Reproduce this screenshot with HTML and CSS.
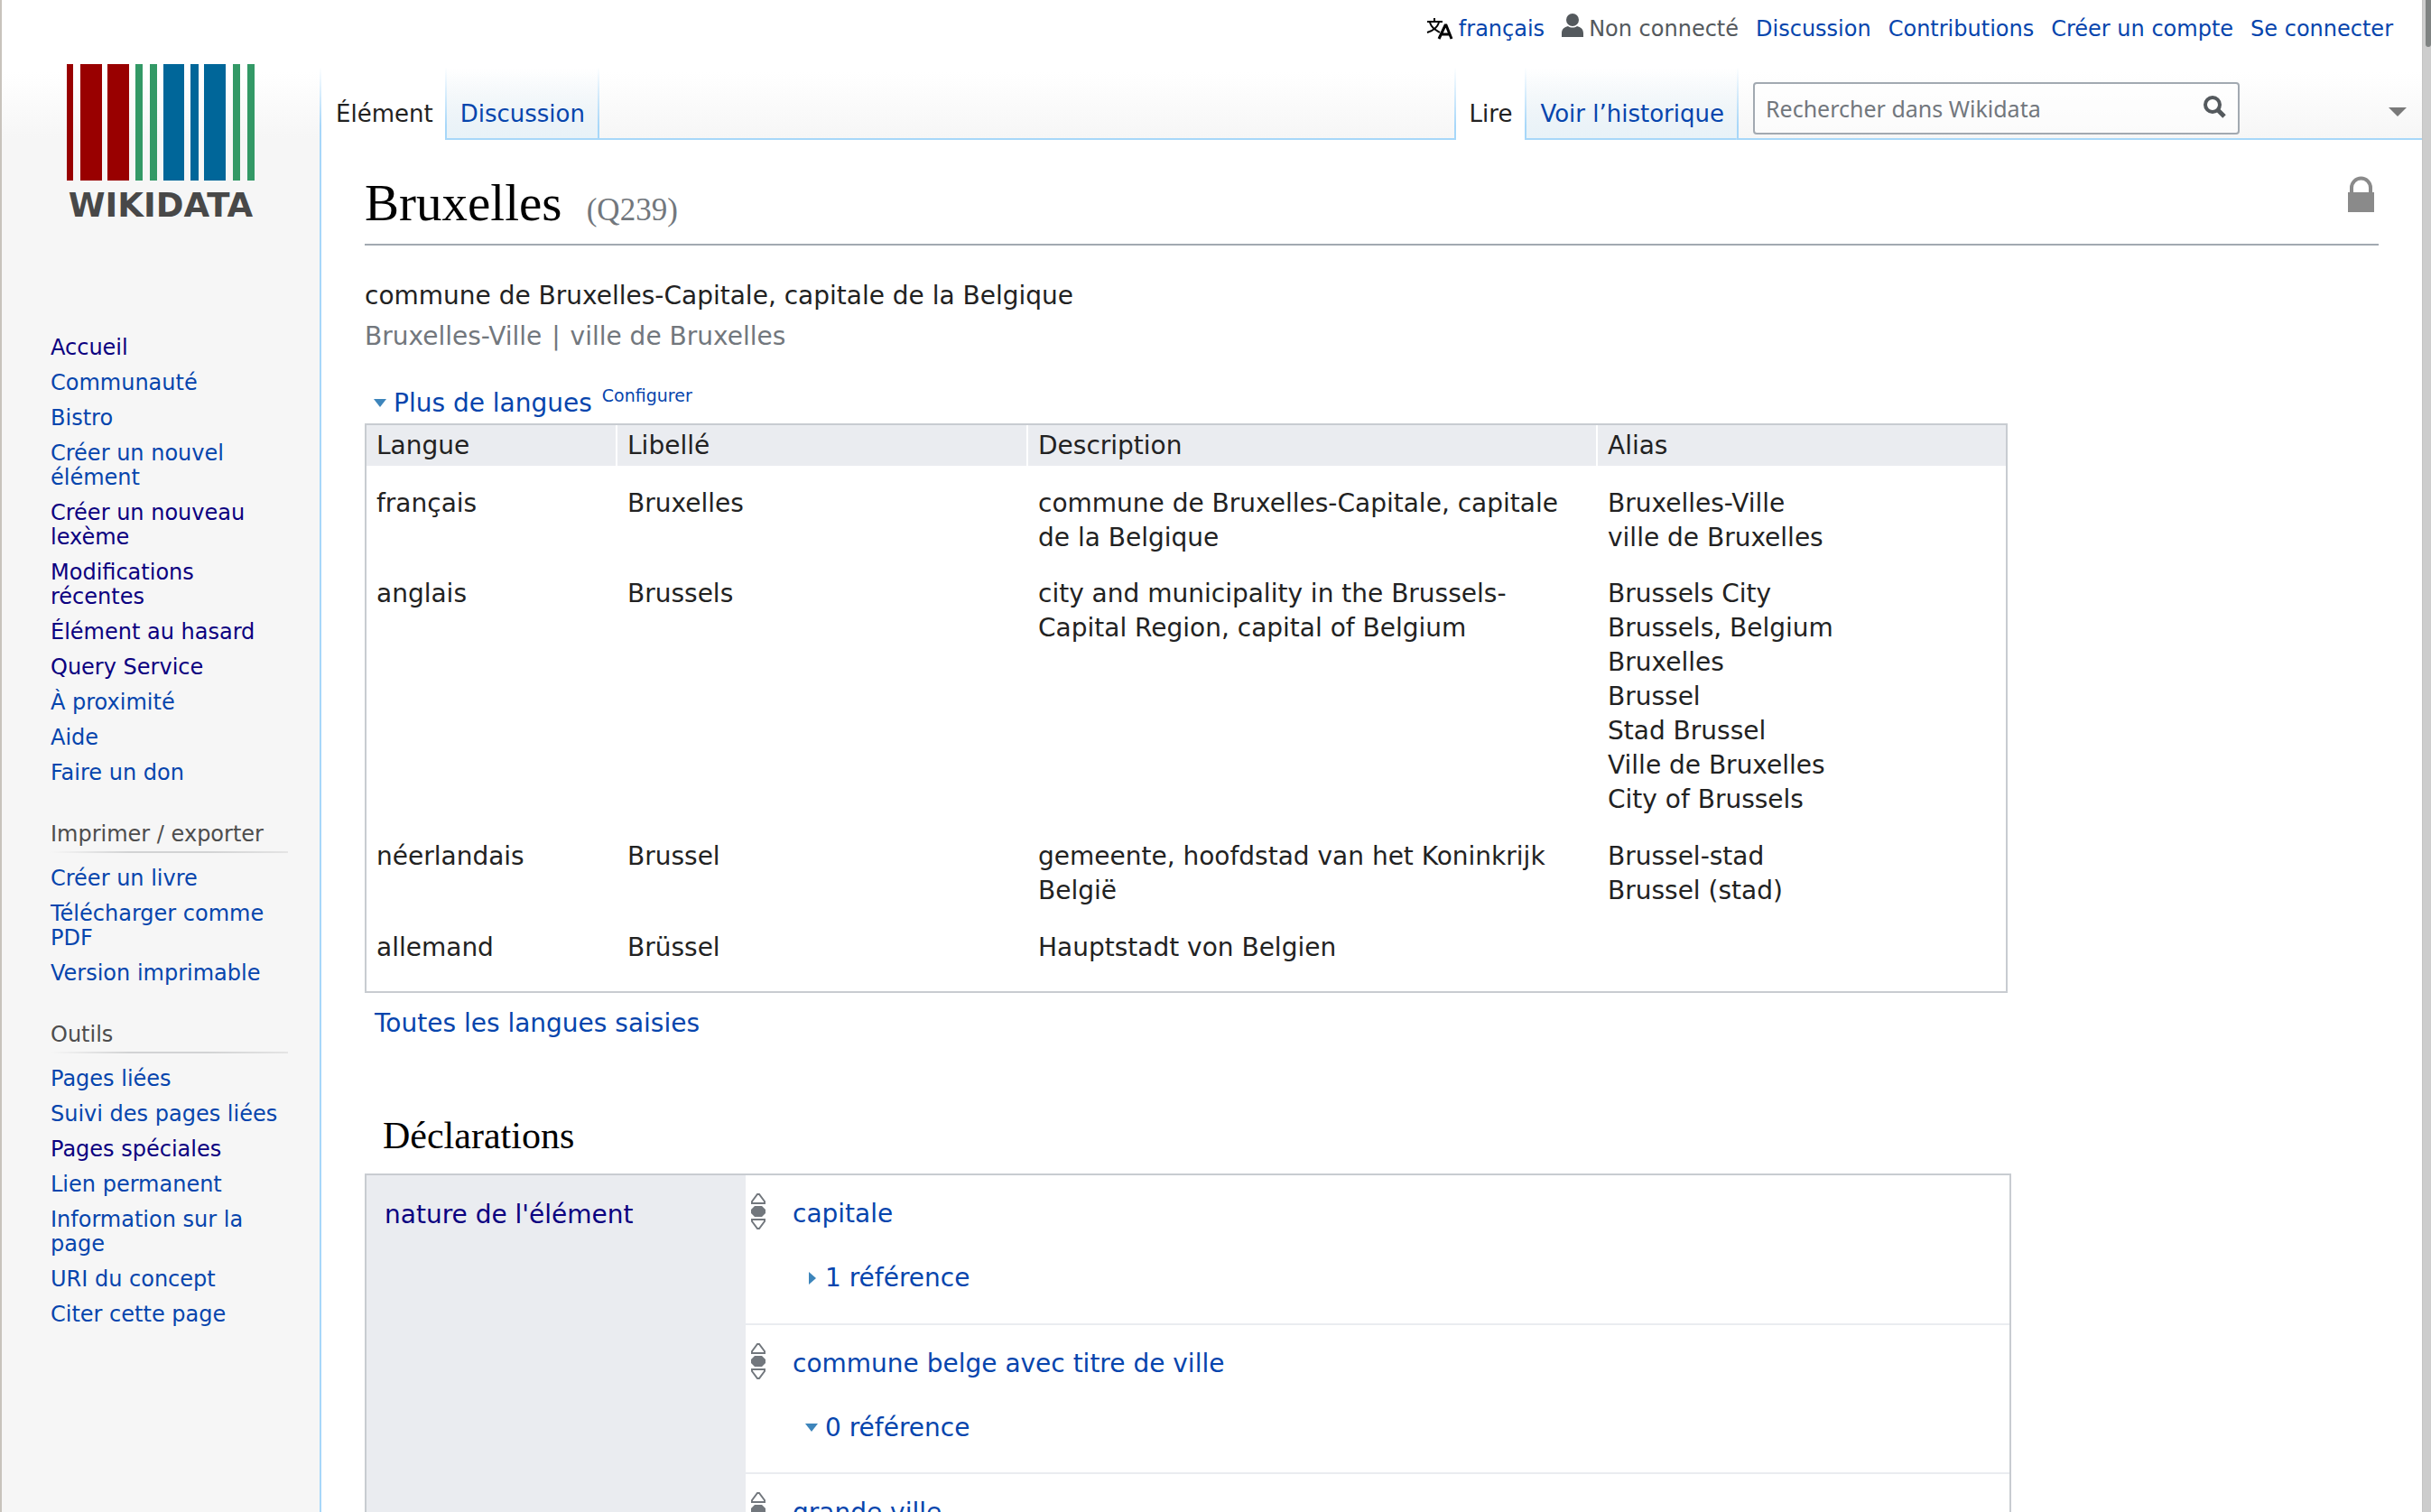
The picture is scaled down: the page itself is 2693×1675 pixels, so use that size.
FILE: index.html
```html
<!DOCTYPE html>
<html lang="fr">
<head>
<meta charset="utf-8">
<title>Bruxelles - Wikidata</title>
<link rel="stylesheet" href="styles.css">
</head>
<body>
<div class="page">
  <aside class="sidebar">
    <a class="logo" href="#" aria-label="Wikidata">
      <svg width="208" height="172" viewBox="0 0 208 172">
        <g fill="#900"><path d="M0 0h7v129H0zM15 0h24v129H15zM45 0h24v129H45z"/></g>
        <g fill="#396"><path d="M76 0h8v129h-8zM92 0h8v129h-8zM184 0h8v129h-8zM200 0h8v129h-8z"/></g>
        <g fill="#069"><path d="M107 0h23v129h-23zM137 0h9v129h-9zM152 0h24v129h-24z"/></g>
        <text class="logo-text" x="104" y="169" text-anchor="middle">WIKIDATA</text>
      </svg>
    </a>
    <nav class="portal">
      <ul>
        <li><a class="visited" href="#">Accueil</a></li>
        <li><a href="#">Communauté</a></li>
        <li><a href="#">Bistro</a></li>
        <li><a href="#">Créer un nouvel élément</a></li>
        <li><a class="visited" href="#">Créer un nouveau lexème</a></li>
        <li><a class="visited" href="#">Modifications récentes</a></li>
        <li><a class="visited" href="#">Élément au hasard</a></li>
        <li><a class="visited" href="#">Query Service</a></li>
        <li><a href="#">À proximité</a></li>
        <li><a href="#">Aide</a></li>
        <li><a href="#">Faire un don</a></li>
      </ul>
    </nav>
    <nav class="portal">
      <h3>Imprimer / exporter</h3>
      <ul>
        <li><a href="#">Créer un livre</a></li>
        <li><a href="#">Télécharger comme PDF</a></li>
        <li><a href="#">Version imprimable</a></li>
      </ul>
    </nav>
    <nav class="portal">
      <h3>Outils</h3>
      <ul>
        <li><a href="#">Pages liées</a></li>
        <li><a href="#">Suivi des pages liées</a></li>
        <li><a class="visited" href="#">Pages spéciales</a></li>
        <li><a href="#">Lien permanent</a></li>
        <li><a href="#">Information sur la page</a></li>
        <li><a href="#">URI du concept</a></li>
        <li><a href="#">Citer cette page</a></li>
      </ul>
    </nav>
  </aside>

  <div class="column">
    <header class="head">
      <ul class="personal">
        <li class="with-icon">
          <svg width="30" height="24" viewBox="0 0 30 24" fill="none" stroke="#000" stroke-width="2"><path d="M1 4h17M9 0v4M4 5c2 6 6 8 11 11M14 5c-2 6-6 9-13 11"/><path stroke-width="3" d="M14 23l7-15h1l6 15M16 18h10"/></svg>
          <a href="#">français</a>
        </li>
        <li class="with-icon user">
          <svg width="24" height="26" viewBox="0 0 24 26" fill="#54595d"><circle cx="12" cy="7" r="7"/><path d="M0 26v-4c0-5 3-7 7-8 3 2 7 2 10 0 4 1 7 3 7 8v4z"/></svg>
          <span>Non connecté</span>
        </li>
        <li><a href="#">Discussion</a></li>
        <li><a href="#">Contributions</a></li>
        <li><a href="#">Créer un compte</a></li>
        <li><a href="#">Se connecter</a></li>
      </ul>
      <div class="nav-row">
        <div class="tabs left-tabs">
          <a class="tab selected" href="#">Élément</a>
          <a class="tab" href="#">Discussion</a>
        </div>
        <div class="tabs right-tabs">
          <a class="tab selected" href="#">Lire</a>
          <a class="tab" href="#">Voir l’historique</a>
        </div>
        <form class="search">
          <input type="search" aria-label="Rechercher dans Wikidata" placeholder="Rechercher dans Wikidata">
          <button type="button" aria-label="Rechercher"><svg width="26" height="26" viewBox="0 0 26 26" fill="none" stroke="#54595d" stroke-width="4"><circle cx="11" cy="11" r="8"/><path stroke-width="5" d="M17 17l7 7"/></svg></button>
        </form>
        <button class="more" type="button" aria-label="Plus"><svg width="20" height="10" viewBox="0 0 20 10" fill="#797979"><path d="M0 0h20L10 10z"/></svg></button>
      </div>
    </header>

    <main class="content">
      <div class="title-row">
        <h1>Bruxelles <span class="entity-id">(Q239)</span></h1>
        <svg class="lock" width="29" height="40" viewBox="0 0 29 40"><path d="M4 20v-7a10 10 0 0 1 21 0v7" fill="none" stroke="#8a8a8a" stroke-width="4"/><path d="M0 18h29v22H0z" fill="#8a8a8a"/></svg>
      </div>
      <p class="description">commune de Bruxelles-Capitale, capitale de la Belgique</p>
      <p class="aliases">Bruxelles-Ville <span class="separator">|</span> ville de Bruxelles</p>

      <div class="lang-toggle">
        <svg class="arrow" width="16" height="10" viewBox="0 0 16 10"><path d="M1 0h14L8 9z" fill="#3d85bb"/></svg>
        <a href="#">Plus de langues</a>
        <a class="configure" href="#">Configurer</a>
      </div>

      <table class="terms">
        <colgroup><col class="c-lang"><col class="c-label"><col class="c-desc"><col class="c-alias"></colgroup>
        <thead><tr><th scope="col">Langue</th><th scope="col">Libellé</th><th scope="col">Description</th><th scope="col">Alias</th></tr></thead>
        <tbody>
          <tr><td>français</td><td>Bruxelles</td><td>commune de Bruxelles-Capitale, capitale de la Belgique</td><td><ul><li>Bruxelles-Ville</li><li>ville de Bruxelles</li></ul></td></tr>
          <tr><td>anglais</td><td>Brussels</td><td>city and municipality in the Brussels-Capital Region, capital of Belgium</td><td><ul><li>Brussels City</li><li>Brussels, Belgium</li><li>Bruxelles</li><li>Brussel</li><li>Stad Brussel</li><li>Ville de Bruxelles</li><li>City of Brussels</li></ul></td></tr>
          <tr><td>néerlandais</td><td>Brussel</td><td>gemeente, hoofdstad van het Koninkrijk België</td><td><ul><li>Brussel-stad</li><li>Brussel (stad)</li></ul></td></tr>
          <tr><td>allemand</td><td>Brüssel</td><td>Hauptstadt von Belgien</td><td></td></tr>
        </tbody>
      </table>
      <p class="all-langs"><a href="#">Toutes les langues saisies</a></p>

      <h2>Déclarations</h2>
      <section class="statements">
        <div class="property"><a class="visited" href="#">nature de l'élément</a></div>
        <div class="values">
          <div class="statement">
            <svg class="rank" width="16" height="40" viewBox="0 0 16 40"><g fill="none" stroke="#72777d" stroke-width="2"><path d="M1 11V9l6-8h2l6 8v2zM1 29v2l6 8h2l6-8v-2z"/></g><path d="M4 14h8l4 4v4l-4 4H4l-4-4v-4z" fill="#72777d"/></svg>
            <div class="claim">
              <a href="#">capitale</a>
              <div class="refs"><svg class="arrow" width="16" height="14" viewBox="0 0 16 14"><path d="M5 0l8 7-8 7z" fill="#3d85bb"/></svg><a href="#">1 référence</a></div>
            </div>
          </div>
          <div class="statement">
            <svg class="rank" width="16" height="40" viewBox="0 0 16 40"><g fill="none" stroke="#72777d" stroke-width="2"><path d="M1 11V9l6-8h2l6 8v2zM1 29v2l6 8h2l6-8v-2z"/></g><path d="M4 14h8l4 4v4l-4 4H4l-4-4v-4z" fill="#72777d"/></svg>
            <div class="claim">
              <a href="#">commune belge avec titre de ville</a>
              <div class="refs"><svg class="arrow" width="16" height="10" viewBox="0 0 16 10"><path d="M1 0h14L8 9z" fill="#3d85bb"/></svg><a href="#">0 référence</a></div>
            </div>
          </div>
          <div class="statement">
            <svg class="rank" width="16" height="40" viewBox="0 0 16 40"><g fill="none" stroke="#72777d" stroke-width="2"><path d="M1 11V9l6-8h2l6 8v2zM1 29v2l6 8h2l6-8v-2z"/></g><path d="M4 14h8l4 4v4l-4 4H4l-4-4v-4z" fill="#72777d"/></svg>
            <div class="claim"><a href="#">grande ville</a></div>
          </div>
        </div>
      </section>
    </main>
  </div>
  <div class="scrollbar" aria-hidden="true"><div class="thumb"></div></div>
</div>
</body>
</html>
```
FILE: styles.css
```css
* { box-sizing: border-box; }
html, body { height: 100%; }
body {
  margin: 0;
  overflow: hidden;
  background: #fff;
  color: #222;
  font: 28px/38px "DejaVu Sans", sans-serif;
}
a { color: #0645ad; text-decoration: none; }
a.visited { color: #0b0080; }
ul { list-style: none; margin: 0; padding: 0; }
h1, h2, h3, p { margin: 0; font-weight: normal; }
svg { display: block; flex: none; overflow: visible; }
button { border: 0; padding: 0; background: none; }

.page {
  display: flex;
  height: 100vh;
  overflow: hidden;
  border-left: 2px solid #c8c3bc;
  background: linear-gradient(#fff 80px, #f6f6f6 153px);
}

/* Sidebar */
.sidebar { flex: none; width: 352px; padding: 71px 35px 0 54px; font-size: 24px; line-height: 27px; }
.logo { display: block; margin: 0 0 129px 18px; }
.logo-text { font: bold 37px "DejaVu Sans", sans-serif; fill: #484848; }
.portal { margin-bottom: 41px; }
.portal li + li { margin-top: 12px; }
.portal h3 {
  margin-bottom: 15px;
  padding-bottom: 7px;
  background: linear-gradient(to right, rgba(200, 204, 209, 0), #d2d3d4 33%, #d2d3d4 66%, #e4e4e4) bottom / 100% 2px no-repeat;
  color: #4d4d4d;
  font-size: 24px;
}

/* Header */
.column { flex: 1; min-width: 0; display: flex; flex-direction: column; }
.head { flex: none; }
.personal {
  display: flex;
  justify-content: flex-end;
  gap: 19px;
  height: 75px;
  padding: 14px 32px 0 0;
  font-size: 24px;
  line-height: 37px;
}
.with-icon { display: flex; gap: 6px; }
.with-icon svg { margin-top: 6px; }
.user { color: #54595d; }
.user svg { margin-top: 1px; }
.nav-row { display: flex; height: 80px; font-size: 26px; }
.tabs { display: flex; }
.left-tabs { flex: 1; border-bottom: 2px solid #a7d7f9; }
.tab {
  padding: 32px 14px 0 15px;
  margin-bottom: -2px;
  border-right: 2px solid;
  border-image: linear-gradient(rgba(167, 215, 249, 0), #a7d7f9 80%) 1;
  background: linear-gradient(rgba(255, 255, 255, 0), #e8f2f8) 0 0 / 100% 78px no-repeat, linear-gradient(#a7d7f9, #a7d7f9) bottom / 100% 2px no-repeat;
  white-space: nowrap;
}
.tab.selected { border-left: 2px solid; background: #fff; color: #222; }
.left-tabs .selected { padding-left: 16px; padding-right: 13px; }
.right-tabs .tab { margin-bottom: 0; }
.search {
  display: flex;
  align-items: flex-start;
  flex: none;
  width: 757px;
  padding: 16px 0 0 16px;
  border-bottom: 2px solid #a7d7f9;
}
.search input {
  width: 539px;
  height: 58px;
  margin-right: -56px;
  padding: 0 60px 0 12px;
  border: 2px solid #a2a9b1;
  border-radius: 4px;
  outline: 0;
  background: rgba(255, 255, 255, 0.5);
  color: #222;
  font: 25px "Noto Sans", sans-serif;
  appearance: none;
}
.search input::placeholder { color: #72777d; opacity: 1; }
.search button { padding: 14px 15px; }
.more { display: flex; align-items: center; width: 0; margin: 0; }
.more svg { margin-left: -37px; margin-top: 17px; }

/* Content */
.content { flex: 1; padding: 35px 48px 0; border-left: 2px solid #a7d7f9; background: #fff; }
.title-row {
  display: flex;
  justify-content: space-between;
  height: 82px;
  margin-bottom: 37px;
  border-bottom: 2px solid #a2a9b1;
}
h1 { color: #000; font: 57px/70px "Liberation Serif", serif; }
.entity-id { margin-left: 13px; color: #72777d; font-size: 35px; }
.lock { margin: 5px 5px 0 0; }
.aliases { margin: 7px 0 36px; color: #72777d; }
.separator { margin: 0 2px; }
.lang-toggle { display: flex; align-items: center; margin-bottom: 3px; padding-left: 9px; }
.arrow { margin-right: 7px; }
.configure { align-self: flex-start; margin: -9px 0 0 11px; font-size: 19px; }

.terms {
  width: 1820px;
  max-width: 100%;
  table-layout: fixed;
  border: 2px solid #c8ccd1;
  border-spacing: 0;
}
.c-lang { width: 278px; }
.c-label { width: 455px; }
.c-desc { width: 631px; }
.terms th { padding: 4px 11px 3px; background: #eaecf0; font-weight: normal; text-align: left; }
.terms th:not(:last-child) { border-right: 2px solid #fff; }
.terms td { padding: 12px 11px 13px; vertical-align: top; }
.terms tr:first-child td { padding-top: 23px; padding-bottom: 12px; }
.terms tr:last-child td { padding-bottom: 29px; }
.all-langs { margin: 15px 0 0 11px; }

h2 { margin: 80px 0 17px 20px; color: #000; font: 42px/50px "Liberation Serif", serif; }
.statements { display: flex; width: 1824px; max-width: 100%; border: 2px solid #c8ccd1; }
.property { flex: none; width: 420px; padding: 25px 20px; background: #eaecf0; }
.values { flex: 1; }
.statement { display: flex; height: 165px; padding: 20px 6px 0; }
.statement:first-child { height: 164px; }
.statement + .statement { border-top: 2px solid #eaecf0; }
.claim { padding: 4px 0 0 30px; }
.refs { display: flex; align-items: center; margin-top: 33px; padding-left: 13px; }

/* Scrollbar */
.scrollbar { flex: none; width: 10px; padding-left: 3px; border-left: 1px solid #c4c4c4; background: #cdcdcd; }
.thumb { width: 6px; height: 52px; border-radius: 0 0 3px 3px; background: #7f8382; }
```
